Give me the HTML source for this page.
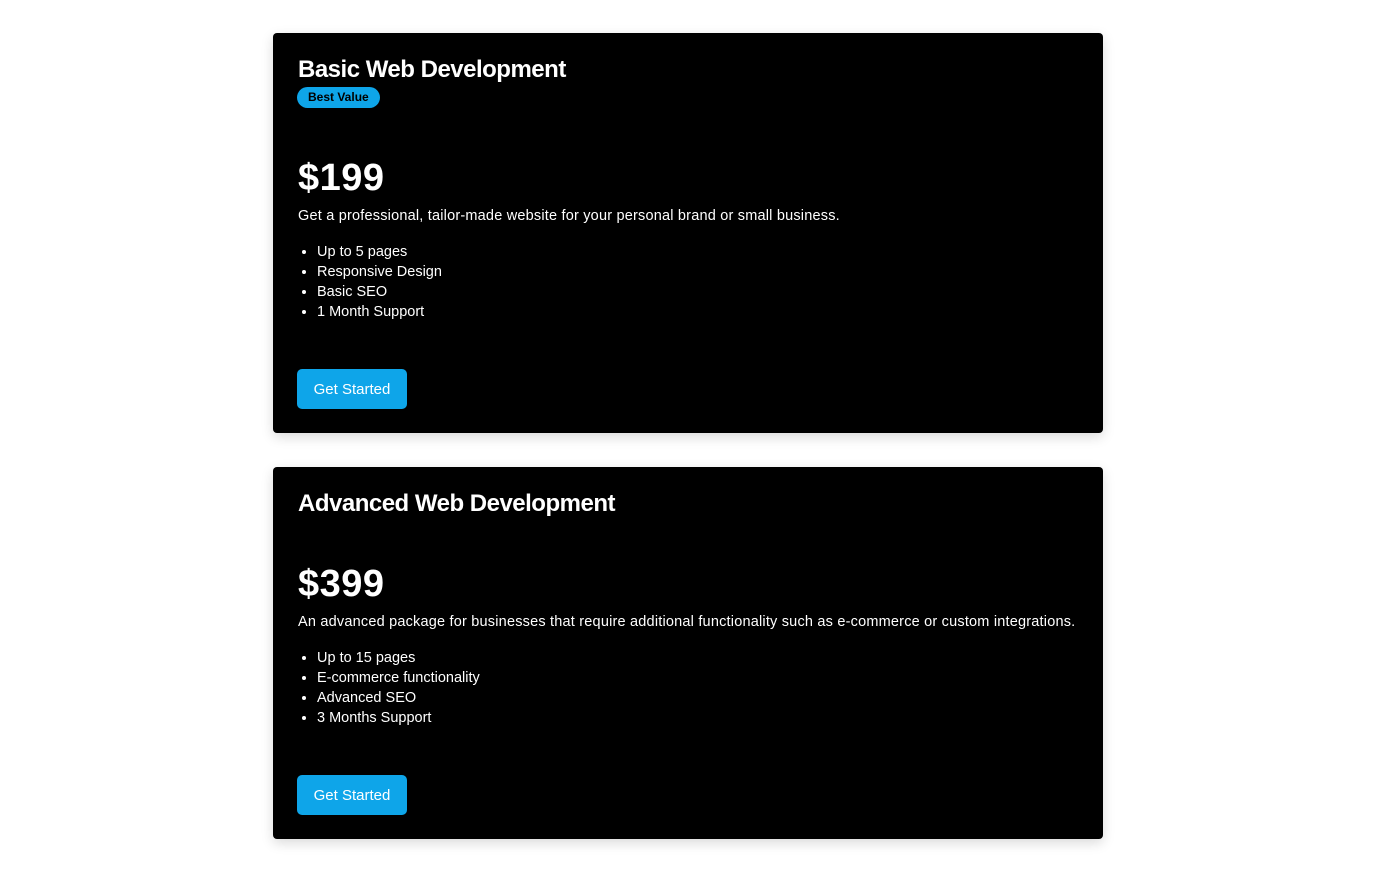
<!DOCTYPE html>
<html><head><style>
body{margin:0;background:#fff;font-family:"Liberation Sans",Arial,sans-serif;color:#fff;}
.card{position:absolute;left:273px;width:830px;background:#000;border-radius:4px;box-shadow:0 4px 12px rgba(0,0,0,.15);}
.a{position:absolute;left:25px;white-space:nowrap;}
h2{margin:0;font-size:24px;font-weight:bold;letter-spacing:-0.5px;line-height:30px;}
.badge{background:#0ea5e9;color:#000;font-size:12px;font-weight:bold;border-radius:11px;padding:0 11px;height:21px;line-height:21px;left:24px;}
.price{font-size:38px;font-weight:bold;line-height:44px;letter-spacing:0.5px;}
.desc{font-size:14.5px;line-height:20px;letter-spacing:0.2px;}
ul{margin:0;padding:0 0 0 20px;font-size:14.5px;line-height:20px;}
.btn{left:24px;width:110px;height:40px;background:#0ea5e9;border-radius:5px;font-size:15px;text-align:center;line-height:40px;}
</style></head><body>
<div class="card" style="top:33px;height:400px">
  <h2 class="a" style="top:22px">Basic Web Development</h2>
  <div class="a badge" style="top:54px">Best Value</div>
  <div class="a price" style="top:123px">$199</div>
  <div class="a desc" style="top:173px">Get a professional, tailor-made website for your personal brand or small business.</div>
  <ul class="a" style="top:209px;left:24px"><li>Up to 5 pages</li><li>Responsive Design</li><li>Basic SEO</li><li>1 Month Support</li></ul>
  <div class="a btn" style="top:336px;line-height:41px">Get Started</div>
</div>
<div class="card" style="top:467px;height:372px">
  <h2 class="a" style="top:22px">Advanced Web Development</h2>
  <div class="a price" style="top:95px">$399</div>
  <div class="a desc" style="top:145px">An advanced package for businesses that require additional functionality such as e-commerce or custom integrations.</div>
  <ul class="a" style="top:181px;left:24px"><li>Up to 15 pages</li><li>E-commerce functionality</li><li>Advanced SEO</li><li>3 Months Support</li></ul>
  <div class="a btn" style="top:308px;line-height:41px">Get Started</div>
</div>
</body></html>
